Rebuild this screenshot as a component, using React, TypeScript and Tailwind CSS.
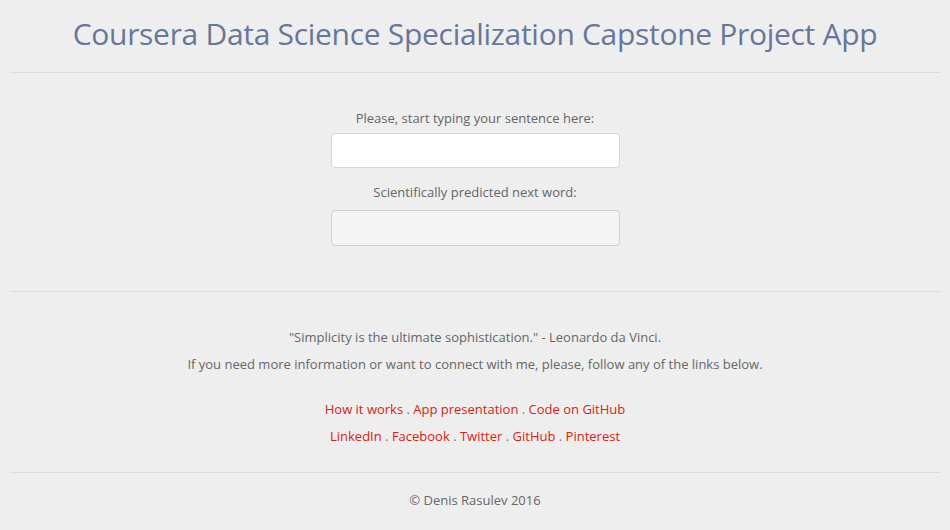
export default function App() {
  const sep = <span className="text-[#777]"> . </span>;
  return (
    <div className="min-h-[530px] bg-[#eeeeee] px-[10px] text-[#666] font-['Open_Sans',sans-serif] text-[13px]">
      <header className="flex h-[73px] items-center justify-center border-b border-[#dcdcdc] pb-[6px]">
        <h1 className="text-[30px] tracking-[-0.3px] text-[#667799]">
          Coursera Data Science Specialization Capstone Project App
        </h1>
      </header>

      <section className="flex flex-col items-center border-b border-[#dcdcdc] pt-[35px] pb-[45px]">
        <label className="mb-[5px] leading-[20px]">Please, start typing your sentence here:</label>
        <input
          type="text"
          className="h-[35px] w-[289px] rounded-[4px] border border-[#d6d6d6] bg-white px-3"
        />
        <label className="mt-[14px] mb-[8px] leading-[20px]">Scientifically predicted next word:</label>
        <div className="h-[36px] w-[289px] rounded-[4px] border border-[#d0d0d0] bg-[#f4f4f4]" />
      </section>

      <section className="flex flex-col items-center border-b border-[#dcdcdc] pt-[35px] pb-[26px] leading-[20px]">
        <p>"Simplicity is the ultimate sophistication." - Leonardo da Vinci.</p>
        <p className="mt-[7px]">
          If you need more information or want to connect with me, please, follow any of the links below.
        </p>
        <p className="mt-[25px] text-[#d9230f]">
          <a href="#">How it works</a>
          {sep}
          <a href="#">App presentation</a>
          {sep}
          <a href="#">Code on GitHub</a>
        </p>
        <p className="mt-[7px] text-[#d9230f]">
          <a href="#">LinkedIn</a>
          {sep}
          <a href="#">Facebook</a>
          {sep}
          <a href="#">Twitter</a>
          {sep}
          <a href="#">GitHub</a>
          {sep}
          <a href="#">Pinterest</a>
        </p>
      </section>

      <footer className="flex justify-center pt-[17px] pb-[20px] leading-[20px]">© Denis Rasulev 2016</footer>
    </div>
  );
}
